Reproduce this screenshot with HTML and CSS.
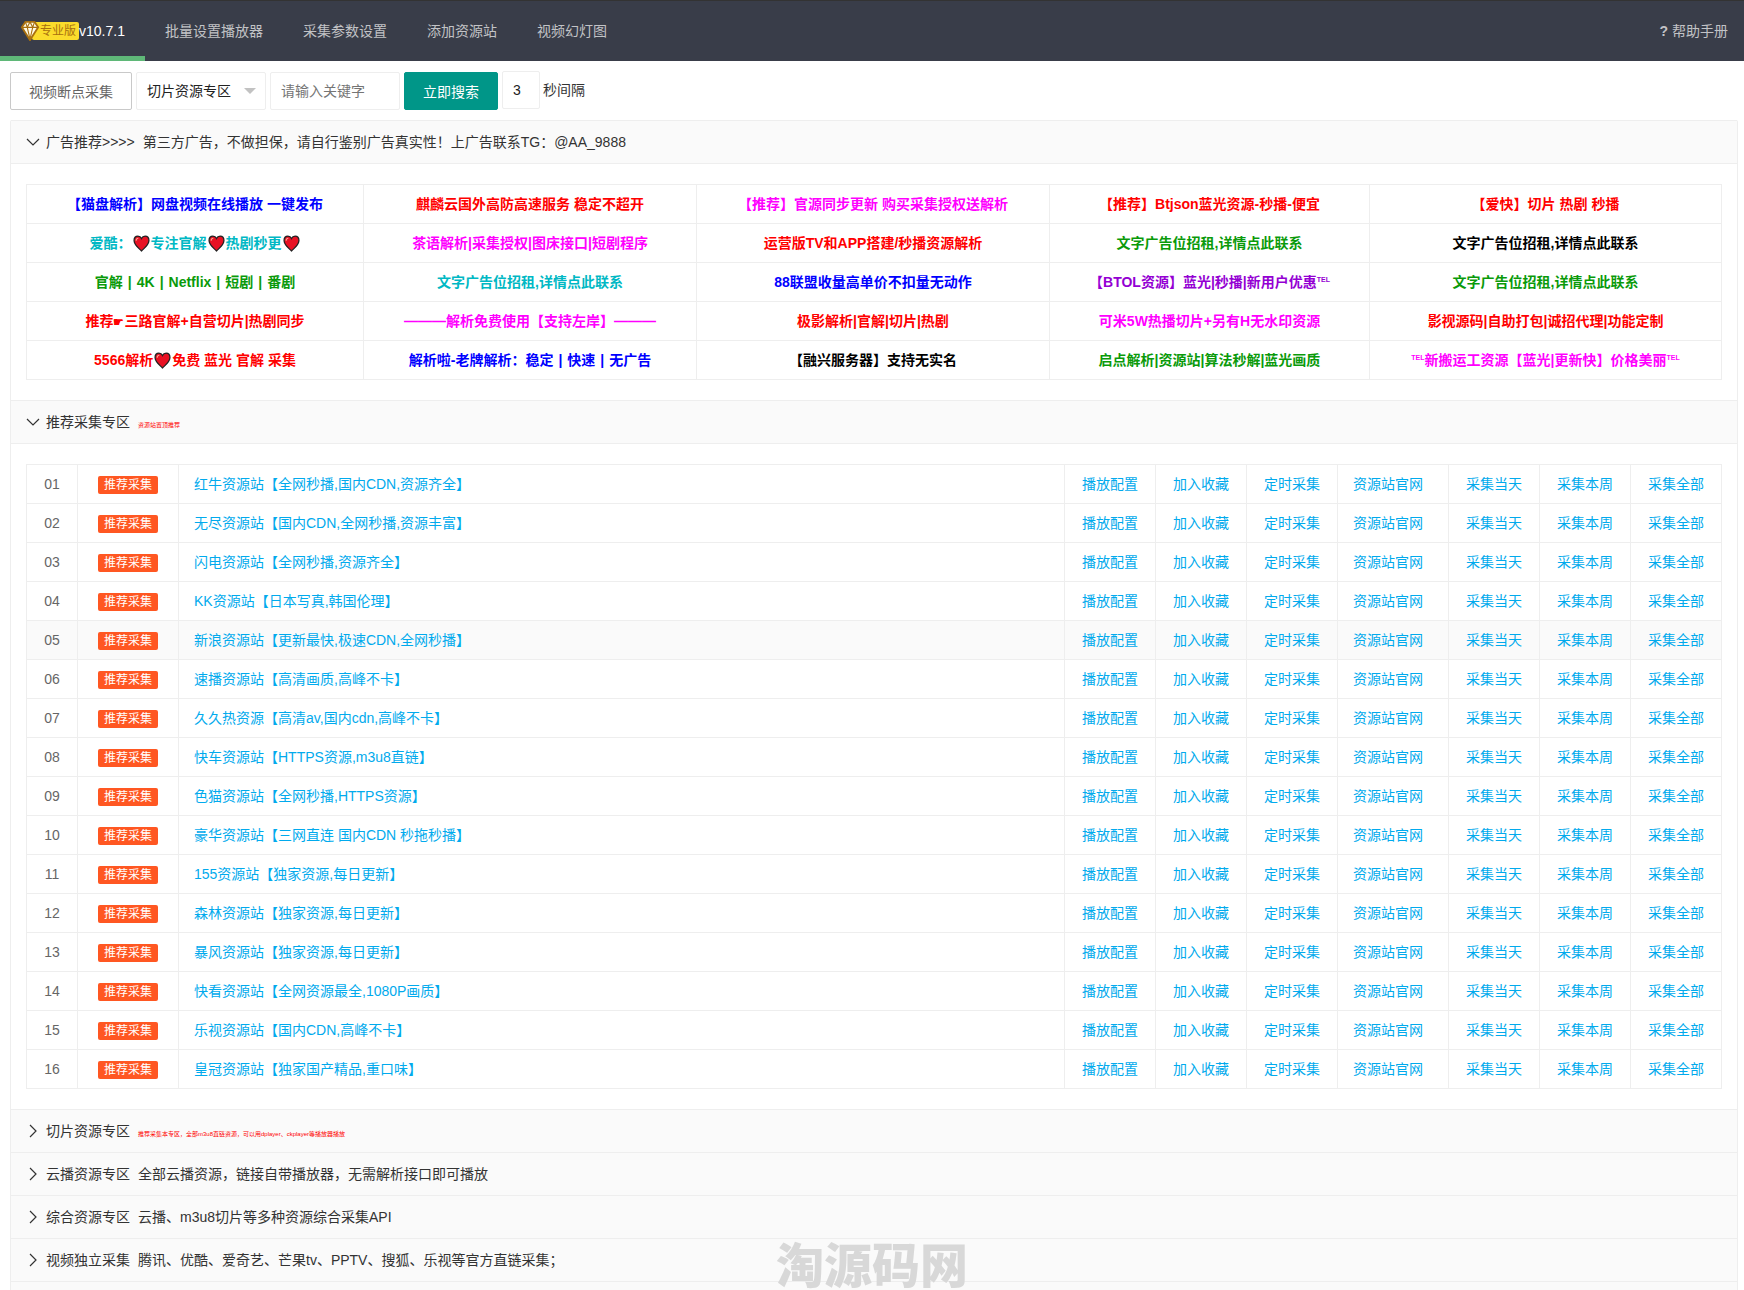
FILE: index.html
```html
<!DOCTYPE html>
<html lang="zh-CN">
<head>
<meta charset="utf-8">
<title>资源采集</title>
<link rel="stylesheet" href="styles.css">
</head>
<body>
<svg class="defs" aria-hidden="true">
  <symbol id="heart" viewBox="0 0 16 16">
    <path d="M8 15C5 12 1 9.300 1 5.200C1 2.600 2.600 1 4.600 1C6.200 1 7.400 1.900 8 3.200C8.600 1.900 9.800 1 11.400 1C13.400 1 15 2.600 15 5.200C15 9.300 11 12 8 15Z" fill="#e81123" stroke="#222" stroke-width="1.200"/>
    <path d="M3 5.500C3 4 4 3 5 3" fill="none" stroke="#f7a08c" stroke-width="1"/>
  </symbol>
</svg>
<nav class="nav">
  <a class="nav-item active" href="#">
    <span class="logo"><svg class="gem" viewBox="0 0 20 22"><path d="M5 1H15L19 7L10 21L1 7Z" fill="#fffbe8" stroke="#a9700f" stroke-width="2"/><path d="M1 7H19M5 1L7 7L10 20L13 7L15 1M7 7L10 1L13 7" fill="none" stroke="#a9700f" stroke-width="1.200"/></svg><span class="tag">专业版</span></span>v10.7.1</a>
  <a class="nav-item" href="#">批量设置播放器</a>
  <a class="nav-item" href="#">采集参数设置</a>
  <a class="nav-item" href="#">添加资源站</a>
  <a class="nav-item" href="#">视频幻灯图</a>
  <a class="nav-item help" href="#"><b>?</b> 帮助手册</a>
</nav>
<main class="page">
  <form class="toolbar">
    <button type="button" class="btn plain">视频断点采集</button>
    <div class="select-wrap"><select class="field" aria-label="资源专区"><option>切片资源专区</option></select></div>
    <input class="field" type="text" placeholder="请输入关键字" aria-label="关键字">
    <button type="button" class="btn primary">立即搜索</button>
    <div class="interval"><input class="field short" id="sec" type="text" value="3"><label for="sec">秒间隔</label></div>
  </form>

  <div class="collapse">
    <section>
      <h2 class="title"><svg class="arrow" viewBox="0 0 14 14"><path d="M1 4L7 10L13 4"/></svg>广告推荐&gt;&gt;&gt;&gt;<span class="note">第三方广告，不做担保，请自行鉴别广告真实性！上广告联系TG：@AA_9888</span></h2>
      <div class="content">
        <table class="ads">
          <colgroup><col class="c1"><col class="c2"><col class="c3"><col class="c4"><col class="c5"></colgroup>
          <tr>
            <td><a href="#" class="blue">【猫盘解析】网盘视频在线播放 一键发布</a></td>
            <td><a href="#" class="red">麒麟云国外高防高速服务 稳定不超开</a></td>
            <td><a href="#" class="pink">【推荐】官源同步更新 购买采集授权送解析</a></td>
            <td><a href="#" class="red">【推荐】Btjson蓝光资源-秒播-便宜</a></td>
            <td><a href="#" class="red">【爱快】切片 热剧 秒播</a></td>
          </tr>
          <tr>
            <td><a href="#" class="cyan">爱酷：<svg class="heart"><use href="#heart"/></svg>专注官解<svg class="heart"><use href="#heart"/></svg>热剧秒更<svg class="heart"><use href="#heart"/></svg></a></td>
            <td><a href="#" class="pink">茶语解析|采集授权|图床接口|短剧程序</a></td>
            <td><a href="#" class="red">运营版TV和APP搭建/秒播资源解析</a></td>
            <td><a href="#" class="green">文字广告位招租,详情点此联系</a></td>
            <td><a href="#" class="black">文字广告位招租,详情点此联系</a></td>
          </tr>
          <tr>
            <td><a href="#" class="green">官解<i class="bar">|</i>4K<i class="bar">|</i>Netflix<i class="bar">|</i>短剧<i class="bar">|</i>番剧</a></td>
            <td><a href="#" class="cyan">文字广告位招租,详情点此联系</a></td>
            <td><a href="#" class="blue">88联盟收量高单价不扣量无动作</a></td>
            <td><a href="#" class="purple">【BTOL资源】蓝光|秒播|新用户优惠<sup>TEL</sup></a></td>
            <td><a href="#" class="green">文字广告位招租,详情点此联系</a></td>
          </tr>
          <tr>
            <td><a href="#" class="red">推荐<span class="hand">☛</span>三路官解+自营切片|热剧同步</a></td>
            <td><a href="#" class="pink">———解析免费使用【支持左岸】———</a></td>
            <td><a href="#" class="red">极影解析|官解|切片|热剧</a></td>
            <td><a href="#" class="pink">可米5W热播切片+另有H无水印资源</a></td>
            <td><a href="#" class="red">影视源码|自助打包|诚招代理|功能定制</a></td>
          </tr>
          <tr>
            <td><a href="#" class="red">5566解析<svg class="heart"><use href="#heart"/></svg>免费 蓝光 官解 采集</a></td>
            <td><a href="#" class="blue">解析啦-老牌解析：稳定<i class="bar">|</i>快速<i class="bar">|</i>无广告</a></td>
            <td><a href="#" class="black">【融兴服务器】支持无实名</a></td>
            <td><a href="#" class="green">启点解析|资源站|算法秒解|蓝光画质</a></td>
            <td><a href="#" class="pink"><sup>TEL</sup>新搬运工资源【蓝光|更新快】价格美丽<sup>TEL</sup></a></td>
          </tr>
        </table>
      </div>
    </section>

    <section>
      <h2 class="title"><svg class="arrow" viewBox="0 0 14 14"><path d="M1 4L7 10L13 4"/></svg>推荐采集专区<span class="note tiny">资源站置顶推荐</span></h2>
      <div class="content">
        <table class="sites">
          <colgroup><col class="no"><col class="mark"><col><col class="act"><col class="act"><col class="act"><col class="web"><col class="act"><col class="act"><col class="act"></colgroup>
          <tbody id="sites"></tbody>
        </table>
      </div>
    </section>

    <section><h2 class="title"><svg class="arrow" viewBox="0 0 14 14"><path d="M4 1L10 7L4 13"/></svg>切片资源专区<span class="note tiny">推荐采集本专区，全部m3u8直链资源，可以用dplayer、ckplayer等播放器播放</span></h2></section>
    <section><h2 class="title"><svg class="arrow" viewBox="0 0 14 14"><path d="M4 1L10 7L4 13"/></svg>云播资源专区<span class="note">全部云播资源，链接自带播放器，无需解析接口即可播放</span></h2></section>
    <section><h2 class="title"><svg class="arrow" viewBox="0 0 14 14"><path d="M4 1L10 7L4 13"/></svg>综合资源专区<span class="note">云播、m3u8切片等多种资源综合采集API</span></h2></section>
    <section><h2 class="title"><svg class="arrow" viewBox="0 0 14 14"><path d="M4 1L10 7L4 13"/></svg>视频独立采集<span class="note">腾讯、优酷、爱奇艺、芒果tv、PPTV、搜狐、乐视等官方直链采集；</span></h2></section>
    <section><h2 class="title"></h2></section>
  </div>
</main>
<div class="watermark">淘源码网</div>
<script src="sites.js"></script>
</body>
</html>
```
FILE: styles.css
```css
* { box-sizing: border-box; }
html { height: 100%; overflow: hidden; }
body {
  margin: 0;
  height: 100%;
  overflow: hidden;
  background: #fff;
  color: #333;
  font: 14px/24px "Liberation Sans", "Noto Sans CJK SC", sans-serif;
}
a { color: inherit; text-decoration: none; }
.defs { display: none; }

.nav {
  display: flex;
  height: 61px;
  border-top: 1px solid #333;
  background: #393d49;
}
.nav-item {
  display: flex;
  align-items: center;
  padding: 0 20px;
  color: #c2c3c6;
  white-space: pre;
}
.nav-item.active {
  padding-top: 5px;
  border-bottom: 5px solid #5fb878;
  color: #fff;
}
.nav-item.help { margin-left: auto; padding-right: 16px; }
.logo { display: flex; align-items: center; width: 59px; }
.gem { width: 20px; height: 20px; z-index: 1; }
.tag {
  flex: 1;
  margin-left: -8px;
  padding-left: 8px;
  border-radius: 2px;
  background: #fbdc2c;
  color: #a9700f;
  font-size: 12px;
  line-height: 18px;
}

.page { padding: 10px 6px 0 10px; }
.toolbar { display: flex; align-items: flex-end; gap: 4px; height: 39px; }
.btn {
  height: 38px;
  padding: 2px 18px 0;
  border: 1px solid #c9c9c9;
  border-radius: 2px;
  background: #fff;
  color: #666;
  font: inherit;
}
.btn.plain { width: 122px; padding: 2px 0 0; }
.btn.primary { border-color: #009688; background: #009688; color: #fff; }
.field {
  width: 130px;
  height: 38px;
  padding: 0 10px;
  border: 1px solid #eee;
  border-radius: 2px;
  background: #fff;
  color: #222;
  font: inherit;
  appearance: none;
}
.field::placeholder { color: #757575; }
.field.short { width: 38px; }
.select-wrap { position: relative; display: flex; }
.select-wrap::after {
  content: "";
  position: absolute;
  top: 16px;
  right: 10px;
  border: 6px solid transparent;
  border-top-color: #c2c2c2;
  border-bottom: 0;
  pointer-events: none;
}
.interval { display: flex; align-items: center; gap: 3px; align-self: flex-start; }

.collapse {
  margin-top: 10px;
  border: 1px solid #eee;
  border-top: 0;
  border-radius: 2px;
}
.title {
  display: flex;
  align-items: center;
  height: 43px;
  margin: 0;
  padding: 0 15px;
  border-top: 1px solid #eee;
  background: #fafafa;
  font-size: 14px;
  font-weight: 400;
}
.arrow { width: 14px; height: 14px; margin-right: 6px; fill: none; stroke: #333; stroke-width: 1.2; }
.note { margin-left: 8px; }
.note.tiny { padding-top: 6px; color: #f00; font-size: 6px; line-height: 12px; }
.content { padding: 20px 15px; border-top: 1px solid #eee; }

table { width: 100%; border-collapse: collapse; table-layout: fixed; color: #666; }
td { height: 39px; padding: 0; border: 1px solid #eee; line-height: 20px; text-align: center; white-space: nowrap; }
.ads { font-weight: 700; }
.c1 { width: 337px; }
.c2 { width: 333px; }
.c3 { width: 353px; }
.c4 { width: 320px; }
.c5 { width: 352px; }
.blue { color: #00f; }
.red { color: #f00; }
.pink { color: #f0f; }
.cyan { color: #00b8c4; }
.green { color: #0a9a0a; }
.purple { color: #9400d3; }
.black { color: #000; }
.heart { width: 19px; height: 17px; vertical-align: -4px; }
.bar { margin: 0 5px; font-style: normal; }
.hand { font-size: 12px; }
sup { font-size: 7px; line-height: 8px; vertical-align: 5px; }

.no { width: 51px; }
.mark { width: 101px; }
.act { width: 91px; }
.web { width: 111px; }
.sites a { color: #01aaed; }
.sites .name, .sites .site { padding-left: 15px; text-align: left; }
.sites tr.hover { background: #fafafa; }
.badge {
  display: inline-block;
  padding: 0 6px;
  border-radius: 2px;
  background: #ff5722;
  color: #fff;
  font-size: 12px;
  line-height: 18px;
}

.watermark {
  position: fixed;
  left: 0;
  right: 0;
  bottom: -1px;
  color: #d8d8d8;
  font-size: 48px;
  font-weight: 900;
  line-height: 48px;
  text-align: center;
  pointer-events: none;
}
```
FILE: sites.js
```js
const sites = [
  "红牛资源站【全网秒播,国内CDN,资源齐全】",
  "无尽资源站【国内CDN,全网秒播,资源丰富】",
  "闪电资源站【全网秒播,资源齐全】",
  "KK资源站【日本写真,韩国伦理】",
  "新浪资源站【更新最快,极速CDN,全网秒播】",
  "速播资源站【高清画质,高峰不卡】",
  "久久热资源【高清av,国内cdn,高峰不卡】",
  "快车资源站【HTTPS资源,m3u8直链】",
  "色猫资源站【全网秒播,HTTPS资源】",
  "豪华资源站【三网直连 国内CDN 秒拖秒播】",
  "155资源站【独家资源,每日更新】",
  "森林资源站【独家资源,每日更新】",
  "暴风资源站【独家资源,每日更新】",
  "快看资源站【全网资源最全,1080P画质】",
  "乐视资源站【国内CDN,高峰不卡】",
  "皇冠资源站【独家国产精品,重口味】"
];
const actions = ["播放配置", "加入收藏", "定时采集", "资源站官网", "采集当天", "采集本周", "采集全部"];
document.getElementById("sites").innerHTML = sites.map((name, i) =>
  `<tr${i === 4 ? ' class="hover"' : ""}><td>${String(i + 1).padStart(2, "0")}</td>` +
  `<td><span class="badge">推荐采集</span></td><td class="name"><a href="#">${name}</a></td>` +
  actions.map(a => `<td${a === "资源站官网" ? ' class="site"' : ""}><a href="#">${a}</a></td>`).join("") +
  "</tr>").join("");
```
